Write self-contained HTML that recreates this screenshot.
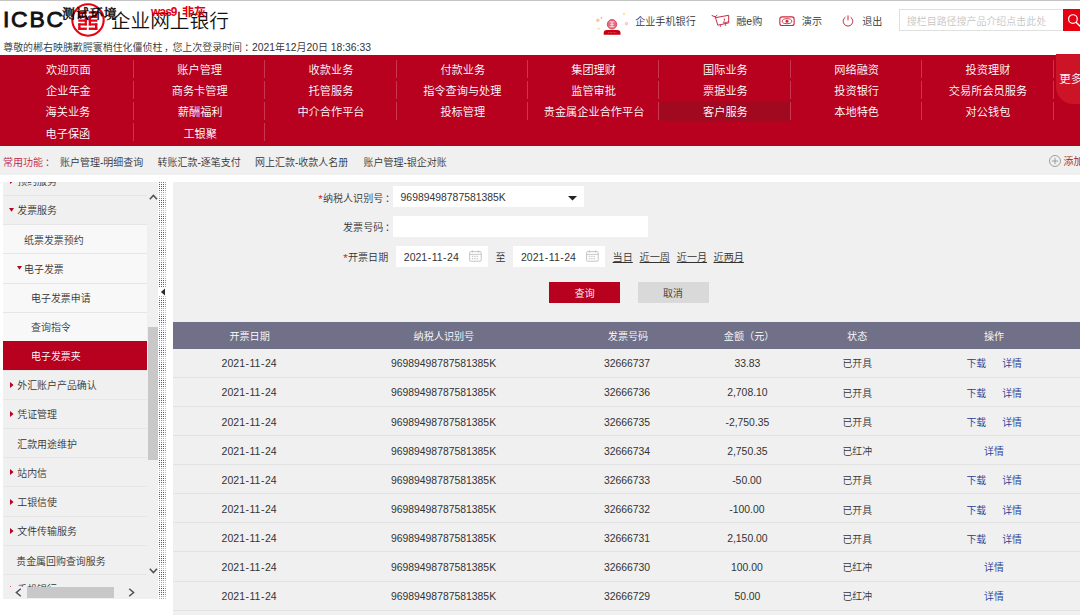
<!DOCTYPE html>
<html lang="zh-CN">
<head>
<meta charset="utf-8">
<title>企业网上银行</title>
<style>
html,body{margin:0;padding:0;}
body{width:1080px;height:615px;overflow:hidden;background:#fff;position:relative;
font-family:"Liberation Sans","Noto Sans CJK SC",sans-serif;font-weight:350;}
.t{position:absolute;white-space:nowrap;margin:0;padding:0;}
.b{position:absolute;}
svg{position:absolute;overflow:visible;}
</style>
</head>
<body>

<div class="b" style="left:0.00px;top:0.00px;width:1080.00px;height:1.00px;background:#c4c4c4;"></div>
<div class="t" style="left:3.00px;top:3.40px;height:32px;line-height:32px;font-size:22.9px;color:#111;letter-spacing:1.75px;-webkit-text-stroke:0.9px #111;">ICBC</div>
<svg style="left:70.7px;top:3.05px" width="34" height="34" viewBox="-17 -17 34 34">
<circle cx="0" cy="0" r="15.7" fill="#fff" stroke="#e60012" stroke-width="2.1"/>
<g fill="#e60012" transform="translate(-0.2,0.6) scale(1.06)">
<rect x="-9" y="-1.05" width="8.1" height="2.1"/><rect x="0.9" y="-1.05" width="8.1" height="2.1"/>
<rect x="-9" y="2.6" width="8.1" height="2"/><rect x="0.9" y="2.6" width="8.1" height="2"/>
<rect x="-9" y="-4.6" width="8.1" height="2"/><rect x="0.9" y="-4.6" width="8.1" height="2"/>
<rect x="-9" y="6.6" width="8.1" height="2.2"/><rect x="0.9" y="6.6" width="8.1" height="2.2"/>
<rect x="-9" y="-8.8" width="8.1" height="2.2"/><rect x="0.9" y="-8.8" width="8.1" height="2.2"/>
<rect x="-3" y="-4.6" width="2.1" height="9.2"/><rect x="0.9" y="-4.6" width="2.1" height="9.2"/>
<rect x="-9" y="2.6" width="2.2" height="6.2"/><rect x="6.8" y="2.6" width="2.2" height="6.2"/>
<rect x="-9" y="-8.8" width="2.2" height="6.2"/><rect x="6.8" y="-8.8" width="2.2" height="6.2"/>
</g>
</svg>
<div class="t" style="left:62.00px;top:5.20px;height:18px;line-height:18px;font-size:12.8px;color:#000;letter-spacing:1.15px;font-weight:500;-webkit-text-stroke:0.35px #000;font-family:'Liberation Serif','Noto Serif CJK SC',serif;">测试环境</div>
<div class="t" style="left:110.80px;top:6.50px;height:28px;line-height:28px;font-size:19.7px;color:#111;">企业网上银行</div>
<div class="t" style="left:151.10px;top:4.35px;height:17px;line-height:17px;font-size:11.9px;color:#e60012;font-weight:bold;"><span style="letter-spacing:-0.9px;margin-right:2.2px">was9</span> 非灰</div>
<div class="t" style="left:3.20px;top:40.80px;height:14px;line-height:14px;font-size:9.96px;color:#333;">尊敬的郴右映胰歉腭寰梢住化僵侦柱<span style="position:relative;left:1.5px">，</span>您上次登录时间<span style="position:relative;left:2.2px">：</span><span style="font-size:104%">2021</span>年<span style="font-size:104%">12</span>月<span style="font-size:104%">20</span>日 <span style="font-size:104%">18:36:33</span></div>
<svg style="left:592px;top:8px" width="40" height="30" viewBox="0 0 40 30">
<circle cx="5.85" cy="12.2" r="1.7" fill="#fbc894"/>
<circle cx="9.4" cy="9.9" r="0.8" fill="#ec9aaa"/>
<circle cx="31.95" cy="6.1" r="1.25" fill="#fde692"/>
<circle cx="34.5" cy="15.6" r="1.2" fill="#fbe4e8" stroke="#eeaab8" stroke-width="0.8"/>
<circle cx="6.6" cy="20.7" r="1.2" fill="#fde692"/>
<circle cx="20" cy="16.3" r="4.7" fill="#e66a7c" stroke="#dc4058" stroke-width="0.9"/>
<path d="M17.6 13.9h4.8M17.6 18.7h4.8M20 13.9v4.8M18.2 16.3h3.6" stroke="#fbe0e4" stroke-width="1" fill="none"/>
<path d="M11.7 26.8 V25 Q11.7 22.3 15 22.1 H25.2 Q28.5 22.3 28.5 25 V26.8 Z" fill="#c8000f"/>
<path d="M16 24.6H24.4" stroke="#e0606a" stroke-width="0.7" stroke-dasharray="1 0.5"/>
</svg>
<div class="t" style="left:635.20px;top:14.70px;height:14px;line-height:14px;font-size:10.1px;color:#333;">企业手机银行</div>
<svg style="left:706px;top:8px" width="30" height="24" viewBox="0 0 30 24">
<g fill="none" stroke="#c8203c" stroke-width="0.95" stroke-linecap="round" stroke-linejoin="round">
<path d="M6.1 7.6 L9.2 8.8 L10.9 7.3"/>
<path d="M9.2 8.8 L11.8 17.2 L22.7 14.9 L22.7 7.3 L10.4 9.5"/>
<path d="M18.3 12.6 L17.6 15 L22.2 13.9" stroke-width="0.8"/>
</g>
<circle cx="14.5" cy="18.1" r="0.75" fill="#c8203c"/><circle cx="19.5" cy="17" r="0.75" fill="#c8203c"/>
<circle cx="18.4" cy="11.3" r="0.7" fill="#c8203c"/>
</svg>
<div class="t" style="left:736.20px;top:13.70px;height:14px;line-height:14px;font-size:10.1px;color:#333;">融<span style="font-size:104%">e</span>购</div>
<svg style="left:779px;top:15.6px" width="16" height="11" viewBox="0 0 16 11">
<rect x="0.85" y="0.85" width="14.3" height="8.7" rx="2.3" fill="#fff" stroke="#cc2a3c" stroke-width="1.1"/>
<ellipse cx="8" cy="5.2" rx="4.8" ry="2.5" fill="none" stroke="#cc2a3c" stroke-width="0.9"/>
<circle cx="8" cy="5.2" r="1.5" fill="#cc2a3c"/>
</svg>
<div class="t" style="left:801.80px;top:14.70px;height:14px;line-height:14px;font-size:10.1px;color:#333;">演示</div>
<svg style="left:841.5px;top:15.1px" width="12" height="12" viewBox="0 0 12 12">
<path d="M3.4 2.2 A4.8 4.8 0 1 0 8.6 2.2" fill="none" stroke="#cc2a3c" stroke-width="1"/>
<path d="M6 0.4 V5.4" stroke="#cc2a3c" stroke-width="1" fill="none"/>
</svg>
<div class="t" style="left:862.20px;top:14.70px;height:14px;line-height:14px;font-size:10.1px;color:#333;">退出</div>
<div class="b" style="left:899.3px;top:9px;width:162.9px;height:21.6px;box-sizing:border-box;border:1px solid #e0e0e0;border-right:none;background:#fff;"></div>
<div class="t" style="left:906.80px;top:14.60px;height:14px;line-height:14px;font-size:9.96px;color:#c6c6c6;">搜栏目路径搜产品介绍点击此处</div>
<div class="b" style="left:1063.00px;top:9.00px;width:17.00px;height:21.60px;background:#e60012;"></div>
<svg style="left:1066px;top:12px" width="14" height="16" viewBox="0 0 14 16">
<circle cx="6.9" cy="7.1" r="4.35" fill="none" stroke="#fff" stroke-width="1.2"/>
<path d="M10.2 10.6 L14.6 14.6" stroke="#fff" stroke-width="1.4" stroke-linecap="round"/>
</svg>
<div class="b" style="left:0.00px;top:55.30px;width:1080.00px;height:90.60px;background:#b8001f;"></div>
<div class="t" style="left:-31.60px;width:200px;text-align:center;top:61.60px;height:16px;line-height:16px;font-size:11.2px;color:#fff;">欢迎页面</div>
<div class="b" style="left:132.80px;top:59.65px;width:1.00px;height:18.20px;background:rgba(255,255,255,0.22);"></div>
<div class="t" style="left:99.70px;width:200px;text-align:center;top:61.60px;height:16px;line-height:16px;font-size:11.2px;color:#fff;">账户管理</div>
<div class="b" style="left:264.20px;top:59.65px;width:1.00px;height:18.20px;background:rgba(255,255,255,0.22);"></div>
<div class="t" style="left:231.00px;width:200px;text-align:center;top:61.60px;height:16px;line-height:16px;font-size:11.2px;color:#fff;">收款业务</div>
<div class="b" style="left:395.60px;top:59.65px;width:1.00px;height:18.20px;background:rgba(255,255,255,0.22);"></div>
<div class="t" style="left:362.80px;width:200px;text-align:center;top:61.60px;height:16px;line-height:16px;font-size:11.2px;color:#fff;">付款业务</div>
<div class="b" style="left:527.00px;top:59.65px;width:1.00px;height:18.20px;background:rgba(255,255,255,0.22);"></div>
<div class="t" style="left:493.60px;width:200px;text-align:center;top:61.60px;height:16px;line-height:16px;font-size:11.2px;color:#fff;">集团理财</div>
<div class="b" style="left:658.40px;top:59.65px;width:1.00px;height:18.20px;background:rgba(255,255,255,0.22);"></div>
<div class="t" style="left:625.40px;width:200px;text-align:center;top:61.60px;height:16px;line-height:16px;font-size:11.2px;color:#fff;">国际业务</div>
<div class="b" style="left:789.80px;top:59.65px;width:1.00px;height:18.20px;background:rgba(255,255,255,0.22);"></div>
<div class="t" style="left:756.70px;width:200px;text-align:center;top:61.60px;height:16px;line-height:16px;font-size:11.2px;color:#fff;">网络融资</div>
<div class="b" style="left:921.20px;top:59.65px;width:1.00px;height:18.20px;background:rgba(255,255,255,0.22);"></div>
<div class="t" style="left:888.00px;width:200px;text-align:center;top:61.60px;height:16px;line-height:16px;font-size:11.2px;color:#fff;">投资理财</div>
<div class="b" style="left:1052.60px;top:59.65px;width:1.00px;height:18.20px;background:rgba(255,255,255,0.22);"></div>
<div class="t" style="left:-31.60px;width:200px;text-align:center;top:82.90px;height:16px;line-height:16px;font-size:11.2px;color:#fff;">企业年金</div>
<div class="b" style="left:132.80px;top:80.80px;width:1.00px;height:18.20px;background:rgba(255,255,255,0.22);"></div>
<div class="t" style="left:99.70px;width:200px;text-align:center;top:82.90px;height:16px;line-height:16px;font-size:11.2px;color:#fff;">商务卡管理</div>
<div class="b" style="left:264.20px;top:80.80px;width:1.00px;height:18.20px;background:rgba(255,255,255,0.22);"></div>
<div class="t" style="left:231.00px;width:200px;text-align:center;top:82.90px;height:16px;line-height:16px;font-size:11.2px;color:#fff;">托管服务</div>
<div class="b" style="left:395.60px;top:80.80px;width:1.00px;height:18.20px;background:rgba(255,255,255,0.22);"></div>
<div class="t" style="left:362.30px;width:200px;text-align:center;top:82.90px;height:16px;line-height:16px;font-size:11.2px;color:#fff;">指令查询与处理</div>
<div class="b" style="left:527.00px;top:80.80px;width:1.00px;height:18.20px;background:rgba(255,255,255,0.22);"></div>
<div class="t" style="left:493.60px;width:200px;text-align:center;top:82.90px;height:16px;line-height:16px;font-size:11.2px;color:#fff;">监管审批</div>
<div class="b" style="left:658.40px;top:80.80px;width:1.00px;height:18.20px;background:rgba(255,255,255,0.22);"></div>
<div class="t" style="left:625.40px;width:200px;text-align:center;top:82.90px;height:16px;line-height:16px;font-size:11.2px;color:#fff;">票据业务</div>
<div class="b" style="left:789.80px;top:80.80px;width:1.00px;height:18.20px;background:rgba(255,255,255,0.22);"></div>
<div class="t" style="left:756.70px;width:200px;text-align:center;top:82.90px;height:16px;line-height:16px;font-size:11.2px;color:#fff;">投资银行</div>
<div class="b" style="left:921.20px;top:80.80px;width:1.00px;height:18.20px;background:rgba(255,255,255,0.22);"></div>
<div class="t" style="left:888.00px;width:200px;text-align:center;top:82.90px;height:16px;line-height:16px;font-size:11.2px;color:#fff;">交易所会员服务</div>
<div class="b" style="left:1052.60px;top:80.80px;width:1.00px;height:18.20px;background:rgba(255,255,255,0.22);"></div>
<div class="t" style="left:-32.10px;width:200px;text-align:center;top:104.20px;height:16px;line-height:16px;font-size:11.2px;color:#fff;">海关业务</div>
<div class="b" style="left:132.80px;top:101.95px;width:1.00px;height:18.20px;background:rgba(255,255,255,0.22);"></div>
<div class="t" style="left:100.20px;width:200px;text-align:center;top:104.20px;height:16px;line-height:16px;font-size:11.2px;color:#fff;">薪酬福利</div>
<div class="b" style="left:264.20px;top:101.95px;width:1.00px;height:18.20px;background:rgba(255,255,255,0.22);"></div>
<div class="t" style="left:231.00px;width:200px;text-align:center;top:104.20px;height:16px;line-height:16px;font-size:11.2px;color:#fff;">中介合作平台</div>
<div class="b" style="left:395.60px;top:101.95px;width:1.00px;height:18.20px;background:rgba(255,255,255,0.22);"></div>
<div class="t" style="left:362.80px;width:200px;text-align:center;top:104.20px;height:16px;line-height:16px;font-size:11.2px;color:#fff;">投标管理</div>
<div class="b" style="left:527.00px;top:101.95px;width:1.00px;height:18.20px;background:rgba(255,255,255,0.22);"></div>
<div class="t" style="left:494.10px;width:200px;text-align:center;top:104.20px;height:16px;line-height:16px;font-size:11.2px;color:#fff;">贵金属企业合作平台</div>
<div class="b" style="left:658.40px;top:101.95px;width:1.00px;height:18.20px;background:rgba(255,255,255,0.22);"></div>
<div class="b" style="left:659.50px;top:101.95px;width:130.00px;height:19.00px;background:#a0091f;"></div>
<div class="t" style="left:625.40px;width:200px;text-align:center;top:104.20px;height:16px;line-height:16px;font-size:11.2px;color:#fff;">客户服务</div>
<div class="b" style="left:789.80px;top:101.95px;width:1.00px;height:18.20px;background:rgba(255,255,255,0.22);"></div>
<div class="t" style="left:756.70px;width:200px;text-align:center;top:104.20px;height:16px;line-height:16px;font-size:11.2px;color:#fff;">本地特色</div>
<div class="b" style="left:921.20px;top:101.95px;width:1.00px;height:18.20px;background:rgba(255,255,255,0.22);"></div>
<div class="t" style="left:888.00px;width:200px;text-align:center;top:104.20px;height:16px;line-height:16px;font-size:11.2px;color:#fff;">对公钱包</div>
<div class="b" style="left:1052.60px;top:101.95px;width:1.00px;height:18.20px;background:rgba(255,255,255,0.22);"></div>
<div class="t" style="left:-32.10px;width:200px;text-align:center;top:125.50px;height:16px;line-height:16px;font-size:11.2px;color:#fff;">电子保函</div>
<div class="b" style="left:132.80px;top:123.10px;width:1.00px;height:18.20px;background:rgba(255,255,255,0.22);"></div>
<div class="t" style="left:100.20px;width:200px;text-align:center;top:125.50px;height:16px;line-height:16px;font-size:11.2px;color:#fff;">工银聚</div>
<div class="b" style="left:264.20px;top:123.10px;width:1.00px;height:18.20px;background:rgba(255,255,255,0.22);"></div>
<div class="b" style="left:1056px;top:54px;width:30px;height:50px;background:#cc1426;border-radius:0 0 0 17px;"></div>
<div class="t" style="left:1059.20px;top:70.70px;height:16px;line-height:16px;font-size:11.6px;color:#fff;">更多</div>
<div class="b" style="left:0.00px;top:145.90px;width:1080.00px;height:28.80px;background:#f0f0f0;"></div>
<div class="t" style="left:3.10px;top:155.60px;height:14px;line-height:14px;font-size:10px;color:#c4183c;">常用功能<span style="margin-left:2px">：</span></div>
<div class="t" style="left:60.00px;top:155.60px;height:14px;line-height:14px;font-size:10px;color:#333;">账户管理-明细查询</div>
<div class="t" style="left:157.40px;top:155.60px;height:14px;line-height:14px;font-size:10px;color:#333;">转账汇款-逐笔支付</div>
<div class="t" style="left:255.00px;top:155.60px;height:14px;line-height:14px;font-size:10px;color:#333;">网上汇款-收款人名册</div>
<div class="t" style="left:363.40px;top:155.60px;height:14px;line-height:14px;font-size:10px;color:#333;">账户管理-银企对账</div>
<svg style="left:1048.8px;top:154.7px" width="12" height="12" viewBox="0 0 12 12">
<circle cx="6" cy="6" r="5.5" fill="none" stroke="#8a8a8a" stroke-width="0.8"/>
<path d="M2.9 6H9.1M6 2.9V9.1" stroke="#8a8a8a" stroke-width="0.8"/>
</svg>
<div class="t" style="left:1063.40px;top:155.40px;height:14px;line-height:14px;font-size:10px;color:#a01428;">添加</div>
<div class="b" style="left:3.0px;top:181.8px;width:155.3px;height:416.80px;background:#f0f0f0;overflow:hidden;">
<div class="b" style="left:0;top:13.33px;width:143.6px;height:29.13px;background:#f0f0f0;box-sizing:border-box;border-top:1px solid #e6e6e6;"></div>
<svg style="left:6.30px;top:26.10px" width="5" height="4" viewBox="0 0 5 4"><path d="M0 0H5L2.5 3.8Z" fill="#b8001f"/></svg>
<div class="t" style="left:14.20px;top:22.40px;height:14px;line-height:14px;font-size:9.95px;color:#333;">发票服务</div>
<div class="b" style="left:0;top:-15.80px;width:143.6px;height:29.13px;background:#f0f0f0;box-sizing:border-box;border-top:1px solid #e6e6e6;"></div>
<svg style="left:6.90px;top:-3.63px" width="4" height="6" viewBox="0 0 4 6"><path d="M0 0V6L3.6 3Z" fill="#b8001f"/></svg>
<div class="t" style="left:14.20px;top:-6.73px;height:14px;line-height:14px;font-size:9.95px;color:#333;">预约服务</div>
<div class="b" style="left:0;top:42.46px;width:143.6px;height:29.13px;background:#f8f8f8;box-sizing:border-box;border-top:1px solid #e6e6e6;"></div>
<div class="t" style="left:21.00px;top:52.26px;height:14px;line-height:14px;font-size:9.95px;color:#333;">纸票发票预约</div>
<div class="b" style="left:0;top:71.59px;width:143.6px;height:29.13px;background:#f8f8f8;box-sizing:border-box;border-top:1px solid #e6e6e6;"></div>
<svg style="left:13.70px;top:84.36px" width="5" height="4" viewBox="0 0 5 4"><path d="M0 0H5L2.5 3.8Z" fill="#b8001f"/></svg>
<div class="t" style="left:21.00px;top:81.12px;height:14px;line-height:14px;font-size:9.95px;color:#333;">电子发票</div>
<div class="b" style="left:0;top:100.72px;width:143.6px;height:29.13px;background:#f8f8f8;box-sizing:border-box;border-top:1px solid #e6e6e6;"></div>
<div class="t" style="left:28.00px;top:109.98px;height:14px;line-height:14px;font-size:9.95px;color:#333;">电子发票申请</div>
<div class="b" style="left:0;top:129.85px;width:143.6px;height:29.13px;background:#f8f8f8;box-sizing:border-box;border-top:1px solid #e6e6e6;"></div>
<div class="t" style="left:28.00px;top:138.84px;height:14px;line-height:14px;font-size:9.95px;color:#333;">查询指令</div>
<div class="b" style="left:0;top:158.98px;width:143.6px;height:29.13px;background:#b8001f;box-sizing:border-box;border-top:1px solid #b8001f;"></div>
<div class="t" style="left:28.00px;top:168.70px;height:14px;line-height:14px;font-size:9.95px;color:#fff;">电子发票夹</div>
<div class="b" style="left:0;top:188.11px;width:143.6px;height:29.13px;background:#f0f0f0;box-sizing:border-box;border-top:1px solid #e6e6e6;"></div>
<svg style="left:6.90px;top:200.28px" width="4" height="6" viewBox="0 0 4 6"><path d="M0 0V6L3.6 3Z" fill="#b8001f"/></svg>
<div class="t" style="left:14.20px;top:197.56px;height:14px;line-height:14px;font-size:9.95px;color:#333;">外汇账户产品确认</div>
<div class="b" style="left:0;top:217.24px;width:143.6px;height:29.13px;background:#f0f0f0;box-sizing:border-box;border-top:1px solid #e6e6e6;"></div>
<svg style="left:6.90px;top:229.41px" width="4" height="6" viewBox="0 0 4 6"><path d="M0 0V6L3.6 3Z" fill="#b8001f"/></svg>
<div class="t" style="left:14.20px;top:226.42px;height:14px;line-height:14px;font-size:9.95px;color:#333;">凭证管理</div>
<div class="b" style="left:0;top:246.37px;width:143.6px;height:29.13px;background:#f0f0f0;box-sizing:border-box;border-top:1px solid #e6e6e6;"></div>
<div class="t" style="left:14.20px;top:256.28px;height:14px;line-height:14px;font-size:9.95px;color:#333;">汇款用途维护</div>
<div class="b" style="left:0;top:275.50px;width:143.6px;height:29.13px;background:#f0f0f0;box-sizing:border-box;border-top:1px solid #e6e6e6;"></div>
<svg style="left:6.90px;top:287.67px" width="4" height="6" viewBox="0 0 4 6"><path d="M0 0V6L3.6 3Z" fill="#b8001f"/></svg>
<div class="t" style="left:14.20px;top:285.14px;height:14px;line-height:14px;font-size:9.95px;color:#333;">站内信</div>
<div class="b" style="left:0;top:304.63px;width:143.6px;height:29.13px;background:#f0f0f0;box-sizing:border-box;border-top:1px solid #e6e6e6;"></div>
<svg style="left:6.90px;top:316.80px" width="4" height="6" viewBox="0 0 4 6"><path d="M0 0V6L3.6 3Z" fill="#b8001f"/></svg>
<div class="t" style="left:14.20px;top:314.00px;height:14px;line-height:14px;font-size:9.95px;color:#333;">工银信使</div>
<div class="b" style="left:0;top:333.76px;width:143.6px;height:29.13px;background:#f0f0f0;box-sizing:border-box;border-top:1px solid #e6e6e6;"></div>
<svg style="left:6.90px;top:345.93px" width="4" height="6" viewBox="0 0 4 6"><path d="M0 0V6L3.6 3Z" fill="#b8001f"/></svg>
<div class="t" style="left:14.20px;top:342.86px;height:14px;line-height:14px;font-size:9.95px;color:#333;">文件传输服务</div>
<div class="b" style="left:0;top:362.89px;width:143.6px;height:29.13px;background:#f0f0f0;box-sizing:border-box;border-top:1px solid #e6e6e6;"></div>
<div class="t" style="left:13.20px;top:372.72px;height:14px;line-height:14px;font-size:9.95px;color:#333;">贵金属回购查询服务</div>
<div class="b" style="left:0;top:392.02px;width:143.6px;height:29.13px;background:#f0f0f0;box-sizing:border-box;border-top:1px solid #e6e6e6;"></div>
<svg style="left:6.90px;top:404.19px" width="4" height="6" viewBox="0 0 4 6"><path d="M0 0V6L3.6 3Z" fill="#b8001f"/></svg>
<div class="t" style="left:14.20px;top:401.09px;height:14px;line-height:14px;font-size:9.95px;color:#333;">手机银行</div>
<div class="b" style="left:143.6px;top:0;width:11.7px;height:405.00px;background:#f0f0f0;"></div>
<svg style="left:145.6px;top:12.20px" width="9" height="6" viewBox="0 0 9 6"><path d="M0.8 5.2L4.4 1.4L8 5.2" fill="none" stroke="#505050" stroke-width="1.5"/></svg>
<svg style="left:145.6px;top:386.40px" width="9" height="6" viewBox="0 0 9 6"><path d="M0.8 0.8L4.4 4.6L8 0.8" fill="none" stroke="#505050" stroke-width="1.5"/></svg>
<div class="b" style="left:145.0px;top:145.20px;width:10.3px;height:132.8px;background:#c8c8c8;"></div>
<div class="b" style="left:0;top:405.00px;width:155.3px;height:12px;background:#f0f0f0;"></div>
<div class="b" style="left:24px;top:405.50px;width:87.2px;height:10.6px;background:#c8c8c8;"></div>
<svg style="left:12px;top:406.40px" width="7" height="9" viewBox="0 0 7 9"><path d="M5.8 0.8L1.4 4.5L5.8 8.2" fill="none" stroke="#505050" stroke-width="1.5"/></svg>
<svg style="left:125.3px;top:406.40px" width="7" height="9" viewBox="0 0 7 9"><path d="M1.2 0.8L5.6 4.5L1.2 8.2" fill="none" stroke="#505050" stroke-width="1.5"/></svg>
</div>
<svg style="left:159px;top:182px" width="8" height="106" viewBox="0 0 8 106" shape-rendering="crispEdges">
<defs><pattern id="dotsA" x="0" y="0" width="8" height="16" patternUnits="userSpaceOnUse"><rect x="0" y="0" width="1" height="1" fill="#7e7e7e"/><rect x="2" y="0" width="1" height="1" fill="#7e7e7e"/><rect x="4" y="0" width="1" height="1" fill="#7e7e7e"/><rect x="6" y="0" width="1" height="1" fill="#ababab"/><rect x="0" y="2" width="1" height="1" fill="#5c5c5c"/><rect x="2" y="2" width="1" height="1" fill="#5c5c5c"/><rect x="4" y="2" width="1" height="1" fill="#5c5c5c"/><rect x="6" y="2" width="1" height="1" fill="#959595"/><rect x="0" y="4" width="1" height="1" fill="#5c5c5c"/><rect x="2" y="4" width="1" height="1" fill="#5c5c5c"/><rect x="4" y="4" width="1" height="1" fill="#5c5c5c"/><rect x="6" y="4" width="1" height="1" fill="#959595"/><rect x="0" y="6" width="1" height="1" fill="#5c5c5c"/><rect x="2" y="6" width="1" height="1" fill="#5c5c5c"/><rect x="4" y="6" width="1" height="1" fill="#5c5c5c"/><rect x="6" y="6" width="1" height="1" fill="#959595"/><rect x="0" y="8" width="1" height="1" fill="#6d6d6d"/><rect x="2" y="8" width="1" height="1" fill="#6d6d6d"/><rect x="4" y="8" width="1" height="1" fill="#6d6d6d"/><rect x="6" y="8" width="1" height="1" fill="#a0a0a0"/><rect x="0" y="10" width="1" height="1" fill="#a3a3a3"/><rect x="2" y="10" width="1" height="1" fill="#a3a3a3"/><rect x="4" y="10" width="1" height="1" fill="#a3a3a3"/><rect x="6" y="10" width="1" height="1" fill="#c3c3c3"/><rect x="0" y="12" width="1" height="1" fill="#acacac"/><rect x="2" y="12" width="1" height="1" fill="#acacac"/><rect x="4" y="12" width="1" height="1" fill="#acacac"/><rect x="6" y="12" width="1" height="1" fill="#c9c9c9"/><rect x="0" y="14" width="1" height="1" fill="#ababab"/><rect x="2" y="14" width="1" height="1" fill="#ababab"/><rect x="4" y="14" width="1" height="1" fill="#ababab"/><rect x="6" y="14" width="1" height="1" fill="#c8c8c8"/></pattern></defs>
<rect x="0" y="0" width="8" height="106" fill="url(#dotsA)"/>
</svg>
<svg style="left:159px;top:288px" width="8" height="8" viewBox="0 0 8 8"><path d="M6 0.4V7.6L1.9 4Z" fill="#2a2a2a"/></svg>
<svg style="left:159px;top:296px" width="8" height="303" viewBox="0 0 8 303" shape-rendering="crispEdges">
<defs><pattern id="dotsB" x="0" y="0" width="8" height="16" patternUnits="userSpaceOnUse"><rect x="0" y="0" width="1" height="1" fill="#acacac"/><rect x="2" y="0" width="1" height="1" fill="#acacac"/><rect x="4" y="0" width="1" height="1" fill="#acacac"/><rect x="6" y="0" width="1" height="1" fill="#c9c9c9"/><rect x="0" y="2" width="1" height="1" fill="#898989"/><rect x="2" y="2" width="1" height="1" fill="#898989"/><rect x="4" y="2" width="1" height="1" fill="#898989"/><rect x="6" y="2" width="1" height="1" fill="#b2b2b2"/><rect x="0" y="4" width="1" height="1" fill="#5c5c5c"/><rect x="2" y="4" width="1" height="1" fill="#5c5c5c"/><rect x="4" y="4" width="1" height="1" fill="#5c5c5c"/><rect x="6" y="4" width="1" height="1" fill="#959595"/><rect x="0" y="6" width="1" height="1" fill="#5c5c5c"/><rect x="2" y="6" width="1" height="1" fill="#5c5c5c"/><rect x="4" y="6" width="1" height="1" fill="#5c5c5c"/><rect x="6" y="6" width="1" height="1" fill="#959595"/><rect x="0" y="8" width="1" height="1" fill="#5c5c5c"/><rect x="2" y="8" width="1" height="1" fill="#5c5c5c"/><rect x="4" y="8" width="1" height="1" fill="#5c5c5c"/><rect x="6" y="8" width="1" height="1" fill="#959595"/><rect x="0" y="10" width="1" height="1" fill="#646464"/><rect x="2" y="10" width="1" height="1" fill="#646464"/><rect x="4" y="10" width="1" height="1" fill="#646464"/><rect x="6" y="10" width="1" height="1" fill="#9a9a9a"/><rect x="0" y="12" width="1" height="1" fill="#9a9a9a"/><rect x="2" y="12" width="1" height="1" fill="#9a9a9a"/><rect x="4" y="12" width="1" height="1" fill="#9a9a9a"/><rect x="6" y="12" width="1" height="1" fill="#bdbdbd"/><rect x="0" y="14" width="1" height="1" fill="#acacac"/><rect x="2" y="14" width="1" height="1" fill="#acacac"/><rect x="4" y="14" width="1" height="1" fill="#acacac"/><rect x="6" y="14" width="1" height="1" fill="#c9c9c9"/></pattern></defs>
<rect x="0" y="0" width="8" height="303" fill="url(#dotsB)"/>
</svg>
<div class="b" style="left:172.80px;top:181.70px;width:907.20px;height:433.30px;background:#f0f0f0;"></div>
<div class="t" style="left:195.00px;width:200px;text-align:right;top:191.80px;height:14px;line-height:14px;font-size:10.05px;color:#333;"><span style="color:#d4202e;font-size:11.5px;line-height:0;position:relative;top:1.3px;margin-right:0.3px">*</span>纳税人识别号<span style="margin-left:1.7px">：</span></div>
<div class="b" style="left:392.8px;top:185.5px;width:190.9px;height:21.8px;background:#fff;"></div>
<div class="t" style="left:400.60px;top:189.70px;height:15px;line-height:15px;font-size:10.4px;color:#333;">96989498787581385K</div>
<svg style="left:568.2px;top:195.6px" width="9" height="5" viewBox="0 0 9 5"><path d="M0 0H9L4.5 4.6Z" fill="#222"/></svg>
<div class="t" style="left:195.00px;width:200px;text-align:right;top:221.40px;height:14px;line-height:14px;font-size:10.05px;color:#333;">发票号码<span style="margin-left:1.7px">：</span></div>
<div class="b" style="left:392.8px;top:215.5px;width:254.8px;height:21.6px;background:#fff;"></div>
<div class="t" style="left:188.20px;width:200px;text-align:right;top:250.80px;height:14px;line-height:14px;font-size:10.05px;color:#333;"><span style="color:#d4202e;font-size:11.5px;line-height:0;position:relative;top:1.3px;margin-right:0.3px">*</span>开票日期</div>
<div class="b" style="left:395.6px;top:245.6px;width:92.8px;height:21.6px;background:#fff;"></div>
<div class="t" style="left:403.80px;top:250.10px;height:15px;line-height:15px;font-size:10.5px;color:#333;">2021<span style="margin:0 0.5px">-</span>11<span style="margin:0 0.5px">-</span>24</div>
<svg style="left:468.5px;top:250.0px" width="13" height="12" viewBox="0 0 13 12">
<rect x="0.6" y="1.6" width="11.6" height="9.6" rx="1" fill="none" stroke="#bdbdbd" stroke-width="0.9"/>
<path d="M0.6 4.4H12.2" stroke="#bdbdbd" stroke-width="0.8"/>
<path d="M3.4 0.4V2.6M9.4 0.4V2.6" stroke="#bdbdbd" stroke-width="0.9"/>
<path d="M2.8 6.4H10M2.8 8.6H10" stroke="#c8c8c8" stroke-width="1.1" stroke-dasharray="1.4 1"/>
</svg>
<div class="t" style="left:495.60px;top:251.00px;height:14px;line-height:14px;font-size:10.05px;color:#333;">至</div>
<div class="b" style="left:513.4px;top:245.6px;width:91.8px;height:21.6px;background:#fff;"></div>
<div class="t" style="left:521.00px;top:250.10px;height:15px;line-height:15px;font-size:10.5px;color:#333;">2021<span style="margin:0 0.5px">-</span>11<span style="margin:0 0.5px">-</span>24</div>
<svg style="left:585.9px;top:250.0px" width="13" height="12" viewBox="0 0 13 12">
<rect x="0.6" y="1.6" width="11.6" height="9.6" rx="1" fill="none" stroke="#bdbdbd" stroke-width="0.9"/>
<path d="M0.6 4.4H12.2" stroke="#bdbdbd" stroke-width="0.8"/>
<path d="M3.4 0.4V2.6M9.4 0.4V2.6" stroke="#bdbdbd" stroke-width="0.9"/>
<path d="M2.8 6.4H10M2.8 8.6H10" stroke="#c8c8c8" stroke-width="1.1" stroke-dasharray="1.4 1"/>
</svg>
<div class="t" style="left:612.60px;top:251.00px;height:14px;line-height:14px;font-size:10.1px;color:#333;text-decoration:underline;">当日</div>
<div class="t" style="left:639.60px;top:251.00px;height:14px;line-height:14px;font-size:10.1px;color:#333;text-decoration:underline;">近一周</div>
<div class="t" style="left:676.80px;top:251.00px;height:14px;line-height:14px;font-size:10.1px;color:#333;text-decoration:underline;">近一月</div>
<div class="t" style="left:713.60px;top:251.00px;height:14px;line-height:14px;font-size:10.1px;color:#333;text-decoration:underline;">近两月</div>
<div class="b" style="left:548.80px;top:282.10px;width:71.10px;height:21.10px;background:#b8001f;"></div>
<div class="t" style="left:484.70px;width:200px;text-align:center;top:287.00px;height:14px;line-height:14px;font-size:9.9px;color:#fff;">查询</div>
<div class="b" style="left:637.80px;top:282.10px;width:70.90px;height:21.10px;background:#d9d9d9;"></div>
<div class="t" style="left:572.90px;width:200px;text-align:center;top:287.00px;height:14px;line-height:14px;font-size:9.9px;color:#333;">取消</div>
<div class="b" style="left:172.80px;top:321.60px;width:907.20px;height:27.10px;background:#707088;"></div>
<div class="t" style="left:149.60px;width:200px;text-align:center;top:330.00px;height:14px;line-height:14px;font-size:10.1px;color:#fff;">开票日期</div>
<div class="t" style="left:343.90px;width:200px;text-align:center;top:330.00px;height:14px;line-height:14px;font-size:10.1px;color:#fff;">纳税人识别号</div>
<div class="t" style="left:528.00px;width:200px;text-align:center;top:330.00px;height:14px;line-height:14px;font-size:10.1px;color:#fff;">发票号码</div>
<div class="t" style="left:649.10px;width:200px;text-align:center;top:330.00px;height:14px;line-height:14px;font-size:10.1px;color:#fff;">金额（元）</div>
<div class="t" style="left:757.20px;width:200px;text-align:center;top:330.00px;height:14px;line-height:14px;font-size:10.1px;color:#fff;">状态</div>
<div class="t" style="left:894.10px;width:200px;text-align:center;top:330.00px;height:14px;line-height:14px;font-size:10.1px;color:#fff;">操作</div>
<div class="t" style="left:149.10px;width:200px;text-align:center;top:356.30px;height:15px;line-height:15px;font-size:10.5px;color:#333;">2021<span style="margin:0 0.5px">-</span>11<span style="margin:0 0.5px">-</span>24</div>
<div class="t" style="left:343.50px;width:200px;text-align:center;top:356.30px;height:15px;line-height:15px;font-size:10.4px;color:#333;">96989498787581385K</div>
<div class="t" style="left:527.00px;width:200px;text-align:center;top:356.30px;height:15px;line-height:15px;font-size:10.4px;color:#333;">32666737</div>
<div class="t" style="left:647.40px;width:200px;text-align:center;top:356.30px;height:15px;line-height:15px;font-size:10.4px;color:#333;">33.83</div>
<div class="t" style="left:757.30px;width:200px;text-align:center;top:357.40px;height:14px;line-height:14px;font-size:9.9px;color:#333;">已开具</div>
<div class="t" style="left:966.40px;top:357.40px;height:14px;line-height:14px;font-size:9.9px;color:#1e3c96;">下载</div>
<div class="t" style="left:1002.20px;top:357.40px;height:14px;line-height:14px;font-size:9.9px;color:#1e3c96;">详情</div>
<div class="b" style="left:172.80px;top:376.63px;width:907.20px;height:1.00px;background:#e2e2e2;"></div>
<div class="t" style="left:149.10px;width:200px;text-align:center;top:385.16px;height:15px;line-height:15px;font-size:10.5px;color:#333;">2021<span style="margin:0 0.5px">-</span>11<span style="margin:0 0.5px">-</span>24</div>
<div class="t" style="left:343.50px;width:200px;text-align:center;top:385.16px;height:15px;line-height:15px;font-size:10.4px;color:#333;">96989498787581385K</div>
<div class="t" style="left:527.00px;width:200px;text-align:center;top:385.16px;height:15px;line-height:15px;font-size:10.4px;color:#333;">32666736</div>
<div class="t" style="left:647.40px;width:200px;text-align:center;top:385.16px;height:15px;line-height:15px;font-size:10.4px;color:#333;">2,708.10</div>
<div class="t" style="left:757.30px;width:200px;text-align:center;top:387.26px;height:14px;line-height:14px;font-size:9.9px;color:#333;">已开具</div>
<div class="t" style="left:966.40px;top:387.26px;height:14px;line-height:14px;font-size:9.9px;color:#1e3c96;">下载</div>
<div class="t" style="left:1002.20px;top:387.26px;height:14px;line-height:14px;font-size:9.9px;color:#1e3c96;">详情</div>
<div class="b" style="left:172.80px;top:405.76px;width:907.20px;height:1.00px;background:#e2e2e2;"></div>
<div class="t" style="left:149.10px;width:200px;text-align:center;top:415.02px;height:15px;line-height:15px;font-size:10.5px;color:#333;">2021<span style="margin:0 0.5px">-</span>11<span style="margin:0 0.5px">-</span>24</div>
<div class="t" style="left:343.50px;width:200px;text-align:center;top:415.02px;height:15px;line-height:15px;font-size:10.4px;color:#333;">96989498787581385K</div>
<div class="t" style="left:527.00px;width:200px;text-align:center;top:415.02px;height:15px;line-height:15px;font-size:10.4px;color:#333;">32666735</div>
<div class="t" style="left:647.40px;width:200px;text-align:center;top:415.02px;height:15px;line-height:15px;font-size:10.4px;color:#333;">-2,750.35</div>
<div class="t" style="left:757.30px;width:200px;text-align:center;top:416.12px;height:14px;line-height:14px;font-size:9.9px;color:#333;">已开具</div>
<div class="t" style="left:966.40px;top:416.12px;height:14px;line-height:14px;font-size:9.9px;color:#1e3c96;">下载</div>
<div class="t" style="left:1002.20px;top:416.12px;height:14px;line-height:14px;font-size:9.9px;color:#1e3c96;">详情</div>
<div class="b" style="left:172.80px;top:434.89px;width:907.20px;height:1.00px;background:#e2e2e2;"></div>
<div class="t" style="left:149.10px;width:200px;text-align:center;top:443.88px;height:15px;line-height:15px;font-size:10.5px;color:#333;">2021<span style="margin:0 0.5px">-</span>11<span style="margin:0 0.5px">-</span>24</div>
<div class="t" style="left:343.50px;width:200px;text-align:center;top:443.88px;height:15px;line-height:15px;font-size:10.4px;color:#333;">96989498787581385K</div>
<div class="t" style="left:527.00px;width:200px;text-align:center;top:443.88px;height:15px;line-height:15px;font-size:10.4px;color:#333;">32666734</div>
<div class="t" style="left:647.40px;width:200px;text-align:center;top:443.88px;height:15px;line-height:15px;font-size:10.4px;color:#333;">2,750.35</div>
<div class="t" style="left:757.30px;width:200px;text-align:center;top:444.98px;height:14px;line-height:14px;font-size:9.9px;color:#333;">已红冲</div>
<div class="t" style="left:984.00px;top:444.98px;height:14px;line-height:14px;font-size:9.9px;color:#1e3c96;">详情</div>
<div class="b" style="left:172.80px;top:464.02px;width:907.20px;height:1.00px;background:#e2e2e2;"></div>
<div class="t" style="left:149.10px;width:200px;text-align:center;top:472.74px;height:15px;line-height:15px;font-size:10.5px;color:#333;">2021<span style="margin:0 0.5px">-</span>11<span style="margin:0 0.5px">-</span>24</div>
<div class="t" style="left:343.50px;width:200px;text-align:center;top:472.74px;height:15px;line-height:15px;font-size:10.4px;color:#333;">96989498787581385K</div>
<div class="t" style="left:527.00px;width:200px;text-align:center;top:472.74px;height:15px;line-height:15px;font-size:10.4px;color:#333;">32666733</div>
<div class="t" style="left:646.90px;width:200px;text-align:center;top:472.74px;height:15px;line-height:15px;font-size:10.4px;color:#333;">-50.00</div>
<div class="t" style="left:757.30px;width:200px;text-align:center;top:473.84px;height:14px;line-height:14px;font-size:9.9px;color:#333;">已开具</div>
<div class="t" style="left:966.40px;top:473.84px;height:14px;line-height:14px;font-size:9.9px;color:#1e3c96;">下载</div>
<div class="t" style="left:1002.20px;top:473.84px;height:14px;line-height:14px;font-size:9.9px;color:#1e3c96;">详情</div>
<div class="b" style="left:172.80px;top:493.15px;width:907.20px;height:1.00px;background:#e2e2e2;"></div>
<div class="t" style="left:149.10px;width:200px;text-align:center;top:501.60px;height:15px;line-height:15px;font-size:10.5px;color:#333;">2021<span style="margin:0 0.5px">-</span>11<span style="margin:0 0.5px">-</span>24</div>
<div class="t" style="left:343.50px;width:200px;text-align:center;top:501.60px;height:15px;line-height:15px;font-size:10.4px;color:#333;">96989498787581385K</div>
<div class="t" style="left:527.00px;width:200px;text-align:center;top:501.60px;height:15px;line-height:15px;font-size:10.4px;color:#333;">32666732</div>
<div class="t" style="left:646.90px;width:200px;text-align:center;top:501.60px;height:15px;line-height:15px;font-size:10.4px;color:#333;">-100.00</div>
<div class="t" style="left:757.30px;width:200px;text-align:center;top:503.70px;height:14px;line-height:14px;font-size:9.9px;color:#333;">已开具</div>
<div class="t" style="left:966.40px;top:503.70px;height:14px;line-height:14px;font-size:9.9px;color:#1e3c96;">下载</div>
<div class="t" style="left:1002.20px;top:503.70px;height:14px;line-height:14px;font-size:9.9px;color:#1e3c96;">详情</div>
<div class="b" style="left:172.80px;top:522.28px;width:907.20px;height:1.00px;background:#e2e2e2;"></div>
<div class="t" style="left:149.10px;width:200px;text-align:center;top:531.46px;height:15px;line-height:15px;font-size:10.5px;color:#333;">2021<span style="margin:0 0.5px">-</span>11<span style="margin:0 0.5px">-</span>24</div>
<div class="t" style="left:343.50px;width:200px;text-align:center;top:531.46px;height:15px;line-height:15px;font-size:10.4px;color:#333;">96989498787581385K</div>
<div class="t" style="left:527.00px;width:200px;text-align:center;top:531.46px;height:15px;line-height:15px;font-size:10.4px;color:#333;">32666731</div>
<div class="t" style="left:647.40px;width:200px;text-align:center;top:531.46px;height:15px;line-height:15px;font-size:10.4px;color:#333;">2,150.00</div>
<div class="t" style="left:757.30px;width:200px;text-align:center;top:532.56px;height:14px;line-height:14px;font-size:9.9px;color:#333;">已开具</div>
<div class="t" style="left:966.40px;top:532.56px;height:14px;line-height:14px;font-size:9.9px;color:#1e3c96;">下载</div>
<div class="t" style="left:1002.20px;top:532.56px;height:14px;line-height:14px;font-size:9.9px;color:#1e3c96;">详情</div>
<div class="b" style="left:172.80px;top:551.41px;width:907.20px;height:1.00px;background:#e2e2e2;"></div>
<div class="t" style="left:149.10px;width:200px;text-align:center;top:560.32px;height:15px;line-height:15px;font-size:10.5px;color:#333;">2021<span style="margin:0 0.5px">-</span>11<span style="margin:0 0.5px">-</span>24</div>
<div class="t" style="left:343.50px;width:200px;text-align:center;top:560.32px;height:15px;line-height:15px;font-size:10.4px;color:#333;">96989498787581385K</div>
<div class="t" style="left:527.00px;width:200px;text-align:center;top:560.32px;height:15px;line-height:15px;font-size:10.4px;color:#333;">32666730</div>
<div class="t" style="left:646.90px;width:200px;text-align:center;top:560.32px;height:15px;line-height:15px;font-size:10.4px;color:#333;">100.00</div>
<div class="t" style="left:757.30px;width:200px;text-align:center;top:561.42px;height:14px;line-height:14px;font-size:9.9px;color:#333;">已红冲</div>
<div class="t" style="left:984.00px;top:561.42px;height:14px;line-height:14px;font-size:9.9px;color:#1e3c96;">详情</div>
<div class="b" style="left:172.80px;top:580.54px;width:907.20px;height:1.00px;background:#e2e2e2;"></div>
<div class="t" style="left:149.10px;width:200px;text-align:center;top:589.18px;height:15px;line-height:15px;font-size:10.5px;color:#333;">2021<span style="margin:0 0.5px">-</span>11<span style="margin:0 0.5px">-</span>24</div>
<div class="t" style="left:343.50px;width:200px;text-align:center;top:589.18px;height:15px;line-height:15px;font-size:10.4px;color:#333;">96989498787581385K</div>
<div class="t" style="left:527.00px;width:200px;text-align:center;top:589.18px;height:15px;line-height:15px;font-size:10.4px;color:#333;">32666729</div>
<div class="t" style="left:647.40px;width:200px;text-align:center;top:589.18px;height:15px;line-height:15px;font-size:10.4px;color:#333;">50.00</div>
<div class="t" style="left:757.30px;width:200px;text-align:center;top:590.28px;height:14px;line-height:14px;font-size:9.9px;color:#333;">已红冲</div>
<div class="t" style="left:984.00px;top:590.28px;height:14px;line-height:14px;font-size:9.9px;color:#1e3c96;">详情</div>
<div class="b" style="left:172.80px;top:609.67px;width:907.20px;height:1.00px;background:#e2e2e2;"></div>
</body>
</html>
